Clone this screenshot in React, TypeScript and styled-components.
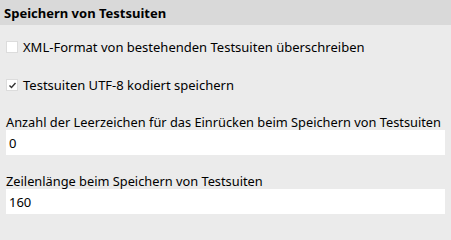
import * as React from "react";
import styled, { createGlobalStyle } from "styled-components";

const GlobalStyle = createGlobalStyle`
  html, body {
    margin: 0;
    padding: 0;
    background: #ebebeb;
  }
  body {
    font-family: "Noto Sans", "Open Sans", sans-serif;
    font-size: 13px;
    color: #000;
  }
`;

const Panel = styled.div`
  width: 451px;
  height: 233px;
  background: #ebebeb;
  display: flex;
  flex-direction: column;
`;

const Header = styled.div`
  height: 26px;
  background: #d9d9d9;
  display: flex;
  align-items: center;
  padding: 0 4px;
  font-weight: bold;
  font-size: 13px;
`;

const Body = styled.div`
  display: flex;
  flex-direction: column;
  padding: 16px 6px 0 6px;
`;

const CheckRow = styled.label`
  display: flex;
  align-items: center;
  gap: 5px;
  height: 12px;
  margin-bottom: 26px;
  white-space: nowrap;

  &:last-of-type {
    margin-bottom: 24px;
  }
`;

const Box = styled.span`
  width: 12px;
  height: 12px;
  box-sizing: border-box;
  border: 1px solid #dcdcdc;
  background: #fff;
  display: flex;
  align-items: center;
  justify-content: center;
`;

const Field = styled.div`
  display: flex;
  flex-direction: column;
  margin-bottom: 19px;
`;

const FieldLabel = styled.div`
  height: 15px;
  line-height: 15px;
  font-size: 12.8px;
  white-space: nowrap;
`;

const Input = styled.div`
  height: 25px;
  background: #fff;
  display: flex;
  align-items: center;
  padding: 0 3px;
  width: 439px;
  box-sizing: border-box;
`;

const Check = ({ checked, label }: { checked?: boolean; label: string }) => (
  <CheckRow>
    <Box>
      {checked && (
        <svg width="9" height="9" viewBox="0 0 9 9">
          <path d="M1.5 4.5 L3.5 6.5 L7.5 2" fill="none" stroke="#333" strokeWidth="1.4" />
        </svg>
      )}
    </Box>
    <span>{label}</span>
  </CheckRow>
);

const App = () => (
  <Panel>
    <GlobalStyle />
    <Header>Speichern von Testsuiten</Header>
    <Body>
      <Check label="XML-Format von bestehenden Testsuiten überschreiben" />
      <Check checked label="Testsuiten UTF-8 kodiert speichern" />
      <Field>
        <FieldLabel>Anzahl der Leerzeichen für das Einrücken beim Speichern von Testsuiten</FieldLabel>
        <Input>0</Input>
      </Field>
      <Field>
        <FieldLabel>Zeilenlänge beim Speichern von Testsuiten</FieldLabel>
        <Input>160</Input>
      </Field>
    </Body>
  </Panel>
);

export default App;
